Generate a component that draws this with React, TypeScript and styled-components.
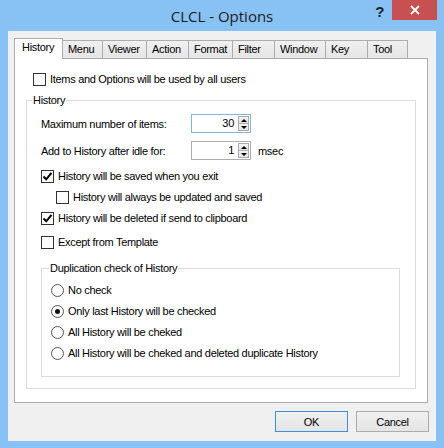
import styled, { createGlobalStyle } from "styled-components";

const GlobalStyle = createGlobalStyle`
  html, body {
    margin: 0;
    padding: 0;
  }
  body {
    width: 444px;
    height: 448px;
    overflow: hidden;
    font-family: "Liberation Sans", Arial, sans-serif;
    font-size: 11px;
    letter-spacing: -0.3px;
    color: #000;
  }
  * {
    box-sizing: border-box;
  }
`;

const Window = styled.div`
  width: 444px;
  height: 448px;
  background: #88c1f3;
  display: flex;
  flex-direction: column;
`;

const TitleBar = styled.div`
  height: 31px;
  display: grid;
  grid-template-columns: 1fr auto 1fr;
  align-items: start;
`;

const Title = styled.div`
  grid-column: 2;
  padding-top: 6px;
  font-family: "Open Sans", "Noto Sans", sans-serif;
  font-size: 15px;
  line-height: 20px;
  letter-spacing: 0;
  color: #1b1b1b;
`;

const Controls = styled.div`
  grid-column: 3;
  justify-self: end;
  display: flex;
  align-items: flex-start;
  padding-right: 7px;
`;

const HelpGlyph = styled.div`
  margin-right: 8px;
  padding-top: 2px;
  font-family: "Liberation Sans", Arial, sans-serif;
  font-weight: bold;
  font-size: 15px;
  line-height: 20px;
  color: #1e1e1e;
`;

const CloseButton = styled.div`
  width: 45px;
  height: 20px;
  background: #c75050;
  display: flex;
  align-items: center;
  justify-content: center;
`;

const Client = styled.div`
  flex: 1;
  margin: 0 8px 7px 8px;
  padding: 7px 8px 0 6px;
  background: #f0f0f0;
  display: flex;
  flex-direction: column;
`;

const TabStrip = styled.div`
  height: 20px;
  display: flex;
  align-items: flex-end;
`;

const Tab = styled.div<{ $active?: boolean; $w: number }>`
  position: relative;
  z-index: ${({ $active }) => ($active ? 2 : 1)};
  width: ${({ $w }) => $w + 1}px;
  height: ${({ $active }) => ($active ? 21 : 18)}px;
  margin-right: -1px;
  margin-bottom: ${({ $active }) => ($active ? -1 : 0)}px;
  padding: 2px 0 0 ${({ $active }) => ($active ? 7 : 5)}px;
  border: 1px solid #acacac;
  border-bottom: none;
  background: ${({ $active }) =>
    $active ? "#ffffff" : "linear-gradient(#f0f0f0, #e5e5e5)"};
  line-height: 13px;
  white-space: nowrap;
`;

const Panel = styled.div`
  height: 345px;
  padding: 14px 11px 0 11px;
  border: 1px solid #acacac;
  background: #ffffff;
`;

const Group = styled.fieldset<{ $gap: number }>`
  margin: ${({ $gap }) => $gap}px 0 0 0;
  padding: 0;
  min-width: 0;
  border: 1px solid #dcdcdc;
`;

const GroupLegend = styled.legend<{ $offset: number }>`
  margin-left: ${({ $offset }) => $offset}px;
  padding: 0 1px;
  line-height: 13px;
`;

const GroupBody = styled.div<{ $pad: string }>`
  padding: ${({ $pad }) => $pad};
  display: flex;
  flex-direction: column;
`;

const FieldRow = styled.div<{ $gap?: number }>`
  margin-top: ${({ $gap }) => $gap ?? 0}px;
  height: 19px;
  display: grid;
  grid-template-columns: 150px 60px auto;
  align-items: center;
`;

const Unit = styled.span`
  padding-left: 7px;
`;

const SpinBox = styled.div<{ $focused?: boolean }>`
  height: 19px;
  padding: 1px;
  border: 1px solid ${({ $focused }) => ($focused ? "#7eb4ea" : "#abadb3")};
  background: #ffffff;
  display: flex;
`;

const SpinValue = styled.span`
  flex: 1;
  padding-right: 4px;
  text-align: right;
  line-height: 15px;
`;

const SpinButtons = styled.div`
  width: 11px;
  display: flex;
  flex-direction: column;
`;

const SpinButton = styled.div`
  flex: 1;
  border: 1px solid #acacac;
  background: linear-gradient(#f3f3f3, #e3e3e3);
  display: flex;
  align-items: center;
  justify-content: center;
  & + & {
    margin-top: -1px;
  }
`;

const Arrow = styled.span<{ $down?: boolean }>`
  width: 0;
  height: 0;
  border-left: 3px solid transparent;
  border-right: 3px solid transparent;
  ${({ $down }) =>
    $down ? "border-top: 3px solid #000;" : "border-bottom: 3px solid #000;"}
`;

const CheckRow = styled.label<{ $gap?: number; $indent?: number }>`
  margin-top: ${({ $gap }) => $gap ?? 0}px;
  margin-left: ${({ $indent }) => $indent ?? 0}px;
  height: 13px;
  display: flex;
  align-items: center;
  gap: 4px;
  line-height: 13px;
  white-space: nowrap;
`;

const CheckBox = styled.span`
  width: 13px;
  height: 13px;
  flex: none;
  border: 1px solid #333333;
  background: #ffffff;
  display: flex;
  align-items: center;
  justify-content: center;
`;

const RadioCircle = styled.span`
  width: 13px;
  height: 13px;
  flex: none;
  border: 1px solid #555555;
  border-radius: 50%;
  background: #ffffff;
  display: flex;
  align-items: center;
  justify-content: center;
`;

const RadioDot = styled.span`
  width: 5px;
  height: 5px;
  border-radius: 50%;
  background: #111111;
`;

const ButtonRow = styled.div`
  padding-top: 8px;
  margin-right: -1px;
  display: flex;
  justify-content: flex-end;
  gap: 8px;
`;

const DialogButton = styled.button<{ $default?: boolean }>`
  width: 73px;
  height: 21px;
  padding: 0;
  border: 1px solid ${({ $default }) => ($default ? "#3c8ee0" : "#acacac")};
  background: linear-gradient(#f0f0f0, #e5e5e5);
  font: inherit;
  letter-spacing: inherit;
  color: #000;
`;

const tabs = [
  { label: "History", w: 48 },
  { label: "Menu", w: 40 },
  { label: "Viewer", w: 44 },
  { label: "Action", w: 42 },
  { label: "Format", w: 44 },
  { label: "Filter", w: 42 },
  { label: "Window", w: 51 },
  { label: "Key", w: 42 },
  { label: "Tool", w: 40 },
];

const radios = [
  "No check",
  "Only last History will be checked",
  "All History will be cheked",
  "All History will be cheked and deleted duplicate History",
];

const Check: React.FC<{ checked?: boolean; label: string; gap?: number; indent?: number }> = ({
  checked,
  label,
  gap,
  indent,
}) => (
  <CheckRow $gap={gap} $indent={indent}>
    <CheckBox>
      {checked && (
        <svg width="11" height="11" viewBox="0 0 11 11">
          <path d="M1.5 5.5 L4.2 8.3 L9.5 1.8" fill="none" stroke="#000" strokeWidth="2" />
        </svg>
      )}
    </CheckBox>
    <span>{label}</span>
  </CheckRow>
);

const Spin: React.FC<{ value: string; focused?: boolean }> = ({ value, focused }) => (
  <SpinBox $focused={focused}>
    <SpinValue>{value}</SpinValue>
    <SpinButtons>
      <SpinButton>
        <Arrow />
      </SpinButton>
      <SpinButton>
        <Arrow $down />
      </SpinButton>
    </SpinButtons>
  </SpinBox>
);

export default function App() {
  return (
    <>
      <GlobalStyle />
      <Window>
        <TitleBar>
          <Title>CLCL - Options</Title>
          <Controls>
            <HelpGlyph>?</HelpGlyph>
            <CloseButton>
              <svg width="10" height="10" viewBox="0 0 10 10">
                <path d="M1 1 L9 9 M9 1 L1 9" stroke="#fff" strokeWidth="1.8" />
              </svg>
            </CloseButton>
          </Controls>
        </TitleBar>
        <Client>
          <TabStrip>
            {tabs.map((t, i) => (
              <Tab key={t.label} $active={i === 0} $w={t.w}>
                {t.label}
              </Tab>
            ))}
          </TabStrip>
          <Panel>
            <Check label="Items and Options will be used by all users" indent={7} />
            <Group $gap={8}>
              <GroupLegend $offset={5}>History</GroupLegend>
              <GroupBody $pad="7px 15px 11px 14px">
                <FieldRow>
                  <span>Maximum number of items:</span>
                  <Spin value="30" focused />
                </FieldRow>
                <FieldRow $gap={8}>
                  <span>Add to History after idle for:</span>
                  <Spin value="1" />
                  <Unit>msec</Unit>
                </FieldRow>
                <Check checked label="History will be saved when you exit" gap={10} />
                <Check label="History will always be updated and saved" gap={8} indent={15} />
                <Check checked label="History will be deleted if send to clipboard" gap={8} />
                <Check label="Except from Template" gap={11} />
                <Group $gap={13}>
                  <GroupLegend $offset={7}>Duplication check of History</GroupLegend>
                  <GroupBody $pad="9px 0 16px 9px">
                    {radios.map((r, i) => (
                      <CheckRow key={r} $gap={i === 0 ? 0 : 8}>
                        <RadioCircle>{i === 1 && <RadioDot />}</RadioCircle>
                        <span>{r}</span>
                      </CheckRow>
                    ))}
                  </GroupBody>
                </Group>
              </GroupBody>
            </Group>
          </Panel>
          <ButtonRow>
            <DialogButton $default>OK</DialogButton>
            <DialogButton>Cancel</DialogButton>
          </ButtonRow>
        </Client>
      </Window>
    </>
  );
}
